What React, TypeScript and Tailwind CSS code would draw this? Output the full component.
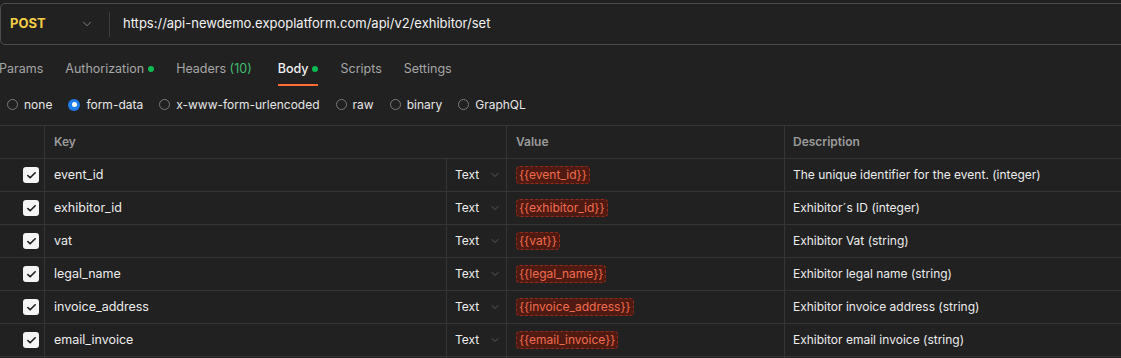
import { ChevronDown, Check } from "lucide-react";

const rows = [
  { key: "event_id", value: "{{event_id}}", desc: "The unique identifier for the event. (integer)" },
  { key: "exhibitor_id", value: "{{exhibitor_id}}", desc: "Exhibitor´s ID (integer)" },
  { key: "vat", value: "{{vat}}", desc: "Exhibitor Vat (string)" },
  { key: "legal_name", value: "{{legal_name}}", desc: "Exhibitor legal name (string)" },
  { key: "invoice_address", value: "{{invoice_address}}", desc: "Exhibitor invoice address (string)" },
  { key: "email_invoice", value: "{{email_invoice}}", desc: "Exhibitor email invoice (string)" },
];

const bodyTypes = ["none", "form-data", "x-www-form-urlencoded", "raw", "binary", "GraphQL"];

export default function App() {
  return (
    <div
      className="w-[1121px] h-[358px] overflow-hidden bg-[#212121] text-[#e6e6e6]"
      style={{ fontFamily: "Inter, 'Noto Sans', sans-serif" }}
    >
      {/* URL bar */}
      <div className="mt-[3px] h-[42px] w-[1140px] rounded-[5px] border border-[#4d4d4d] flex items-center">
        <div className="w-[108px] flex items-center justify-between pl-[9px] pr-[15px]">
          <span className="text-[13px] font-bold text-[#f5ce47]">POST</span>
          <ChevronDown className="h-[14px] w-[14px] text-[#8c8c8c]" strokeWidth={1.5} />
        </div>
        <div className="h-[25px] w-px bg-[#3d3d3d]" />
        <span className="pl-[13px] text-[13px] text-[#f2f2f2]">
          https://api-newdemo.expoplatform.com/api/v2/exhibitor/set
        </span>
      </div>

      {/* Tabs */}
      <div className="mt-[3px] h-[38px] flex items-start gap-[22px] text-[12.5px] text-[#a6a6a6] ml-[-1px]">
        <div className="pt-[12px]">Params</div>
        <div className="pt-[12px] flex items-center gap-[4px]">
          Authorization
          <span className="h-[6px] w-[6px] rounded-full bg-[#0cbb52]" />
        </div>
        <div className="pt-[12px]">
          Headers <span className="text-[#3fbf6f]">(10)</span>
        </div>
        <div className="ml-[4px] pt-[12px] flex flex-col">
          <div className="flex items-center gap-[4px] text-[#f2f2f2] font-medium">
            Body
            <span className="h-[6px] w-[6px] rounded-full bg-[#0cbb52]" />
          </div>
          <div className="mt-[5px] h-[2px] bg-[#ff6c37]" />
        </div>
        <div className="pt-[12px]">Scripts</div>
        <div className="pt-[12px]">Settings</div>
      </div>

      {/* Body type radios */}
      <div className="h-[39px] pb-[2px] flex items-center gap-4 pl-[7px] text-[12px] text-[#e6e6e6]">
        {bodyTypes.map((t) => (
          <div key={t} className="flex items-center gap-[6px]">
            {t === "form-data" ? (
              <span className="h-[12px] w-[12px] rounded-full bg-[#1f7ceb] flex items-center justify-center">
                <span className="h-[5px] w-[5px] rounded-full bg-white" />
              </span>
            ) : (
              <span className="h-[11px] w-[11px] rounded-full border border-[#7a7a7a]" />
            )}
            <span>{t}</span>
          </div>
        ))}
      </div>

      {/* Table */}
      <div className="border-t border-[#353535]">
        <div className="h-[33px] flex border-b border-[#353535] text-[12px] font-semibold text-[#9b9b9b]">
          <div className="w-[45px] border-r border-[#353535]" />
          <div className="w-[462px] border-r border-[#353535] pl-[9px] flex items-center">Key</div>
          <div className="w-[278px] border-r border-[#353535] pl-[9px] flex items-center">Value</div>
          <div className="flex-1 pl-[8px] flex items-center">Description</div>
        </div>
        {rows.map((r) => (
          <div key={r.key} className="h-[33px] flex border-b border-[#353535] text-[12.5px]">
            <div className="w-[45px] border-r border-[#353535] flex items-center pl-[23px]">
              <span className="h-[16px] w-[16px] rounded-[3px] bg-[#f5f5f5] flex items-center justify-center">
                <Check className="h-[11px] w-[11px] text-[#1a1a1a]" strokeWidth={3.5} />
              </span>
            </div>
            <div className="w-[402px] border-r border-[#353535] pl-[9px] flex items-center text-[#ededed]">
              {r.key}
            </div>
            <div className="w-[60px] border-r border-[#353535] pl-[8px] flex items-center gap-[10px] text-[12px] text-[#ededed]">
              Text
              <ChevronDown className="h-[12px] w-[12px] text-[#6e6e6e]" strokeWidth={1.5} />
            </div>
            <div className="w-[278px] border-r border-[#353535] pl-[9px] flex items-center">
              <span className="h-[18px] px-[2px] flex items-center rounded-[4px] border border-dashed border-[#8f2d1f] bg-[#4f1a12] text-[12px] text-[#ef6d4f]">
                {r.value}
              </span>
            </div>
            <div className="flex-1 pl-[8px] flex items-center text-[12px] text-[#ededed]">{r.desc}</div>
          </div>
        ))}
        <div className="h-[33px] flex">
          <div className="w-[45px] border-r border-[#353535]" />
          <div className="w-[402px] border-r border-[#353535]" />
          <div className="w-[60px] border-r border-[#353535]" />
          <div className="w-[278px] border-r border-[#353535]" />
        </div>
      </div>
    </div>
  );
}
